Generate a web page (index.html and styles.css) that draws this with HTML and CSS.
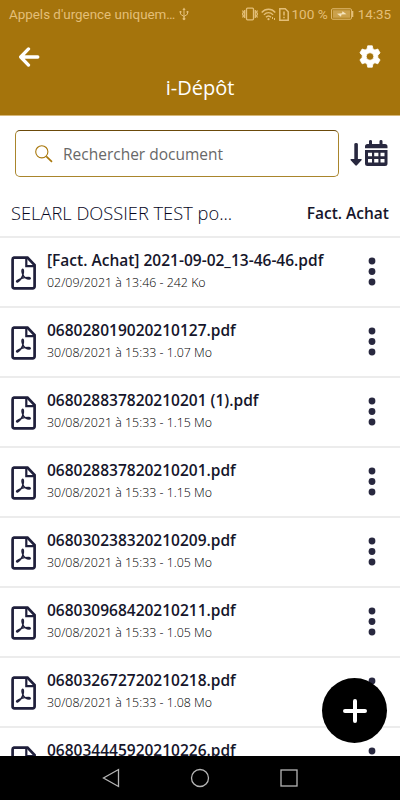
FILE: index.html
```html
<!DOCTYPE html>
<html lang="fr">
<head>
    <meta charset="UTF-8">
    <meta name="viewport" content="width=device-width, initial-scale=1.0">
    <title>i-Dépôt</title>
    <link rel="stylesheet" href="styles.css">
</head>
<body>
    <svg class="sprite" width="0" height="0">
        <symbol id="pdf" viewBox="0 0 26 34">
            <path d="M3 1.600h13.500L23.600 9v21.600a1.800 1.800 0 0 1-1.800 1.800H3.400a1.800 1.800 0 0 1-1.800-1.800V3.400A1.800 1.800 0 0 1 3 1.600z" fill="none" stroke="#1f1f3b" stroke-width="2.700"/>
            <path d="M15.300 2v8.200H24" fill="none" stroke="#1f1f3b" stroke-width="2.200"/>
            <path d="M11.800 18.500c-.9-2.200-1.300-4.900-.3-5.200 1.100-.2 1.200 2.600.5 5.200-.8 3-3.300 6.200-5.200 7.300-1 .5-1.700-.2-.9-1 1.900-1.700 6.700-3.200 11.600-3.400 2.100 0 2.300 1.500.8 1.600-2.400.1-5.400-1.700-6.500-4.500z" fill="none" stroke="#1f1f3b" stroke-width="1.400"/>
        </symbol>
        <symbol id="dots" viewBox="0 0 8 30">
            <circle cx="4" cy="4" r="3.400"/>
            <circle cx="4" cy="14.500" r="3.400"/>
            <circle cx="4" cy="25" r="3.400"/>
        </symbol>
    </svg>

    <div class="screen">
        <header class="header">
            <div class="status">
                <span class="carrier">Appels d'urgence uniquem…</span>
                <svg class="usb" width="10" height="14" viewBox="0 0 10 14" fill="none" stroke="currentColor">
                    <path d="M5 2v9M1.500 5v2.200L5 9.500l3.500-2.300V5"/>
                    <path d="M5 .5l1.600 2.500H3.400zM.6 4h1.800v1.800H.6zM7.600 4h1.800v1.800H7.600z" fill="currentColor" stroke="none"/>
                    <circle cx="5" cy="11.800" r="1.400" fill="currentColor" stroke="none"/>
                </svg>
                <div class="indicators">
                    <svg width="16" height="14" viewBox="0 0 16 14" fill="none" stroke="currentColor" stroke-width="1.300">
                        <rect x="4.500" y="1.200" width="7" height="11.600" rx="1"/>
                        <path d="M2.700 3v8M13.300 3v8M.5 3.500l1 1.500-1 2 1 2-1 1.500M15.500 3.500l-1 1.500 1 2-1 2 1 1.500"/>
                    </svg>
                    <svg class="wifi" width="15" height="13" viewBox="0 0 15 13" fill="none" stroke="currentColor" stroke-width="1.400">
                        <path d="M.7 4.500c3.800-4.300 9.800-4.300 13.600 0M2.900 6.900c2.700-3 6.500-3 9.200 0M5 9.200c1.500-1.700 3.500-1.700 5 0"/>
                        <circle cx="7.500" cy="11.200" r="1.100" fill="currentColor" stroke="none"/>
                        <path d="M11.500 9v2M13.500 10v2" stroke-width="1"/>
                    </svg>
                    <svg class="sim" width="10" height="13" viewBox="0 0 10 13" fill="none" stroke="currentColor" stroke-width="1.500">
                        <path d="M.8.8h5.400l3 3v8.400H.8z"/>
                        <path d="M5 3.500v4M5 8.700v1.600"/>
                    </svg>
                    <span class="percent">100 %</span>
                    <svg class="battery" width="23" height="12" viewBox="0 0 23 12">
                        <rect x=".6" y=".8" width="19.800" height="10.400" rx="1" fill="none" stroke="currentColor"/>
                        <rect x="2" y="2.200" width="17" height="7.600" fill="currentColor" opacity=".6"/>
                        <rect x="21" y="3" width="1.300" height="6" fill="currentColor"/>
                        <path d="M6 5.800l5-.5.500-2 4 2.900-5 .3-.5 2.200z" fill="#f5e4bd"/>
                    </svg>
                    <span class="time">14:35</span>
                </div>
            </div>
            <div class="actions">
                <svg width="22" height="20" viewBox="0 0 22 20" fill="none" stroke="#fff" stroke-width="3.300" stroke-linecap="round" stroke-linejoin="round">
                    <path d="M10.500 1.900L2.700 10l7.800 8.100M3.500 10h16.300"/>
                </svg>
                <svg width="24" height="24" viewBox="0 0 24 24" fill="#fff">
                    <path fill-rule="evenodd" d="M9.700.8h4.600l.6 3.100 2 1.100 2.900-1 2.300 4-2.300 2.200v2.400l2.300 2.200-2.300 4-2.900-1-2 1.200-.6 3.200H9.700L9.100 19l-2-1.200-2.900 1-2.300-4 2.300-2.200v-2.400L1.900 8l2.300-4 2.900 1 2-1.100zM12 7.700a3.800 3.800 0 1 0 0 7.600 3.800 3.800 0 0 0 0-7.600z" stroke="#fff" stroke-width=".8" stroke-linejoin="round"/>
                </svg>
            </div>
            <h1>i-Dépôt</h1>
        </header>

        <div class="toolbar">
            <label class="search">
                <svg width="18" height="18" viewBox="0 0 18 18" fill="none" stroke="#a9780c">
                    <circle cx="6.800" cy="6.800" r="6.100" stroke-width="1.100"/>
                    <path d="M11.300 11.300l5.700 5.500" stroke-width="1.700"/>
                </svg>
                <input type="text" placeholder="Rechercher document">
            </label>
            <svg class="sort" width="38" height="28" viewBox="0 0 38 28" fill="#28283f">
                <path d="M4.300 4.200q0-1.200 1.800-1.200t1.800 1.200V19h3.400q.8.400.2 1.200l-4.600 5.100q-.8.700-1.600 0L.7 20.200Q.1 19.400.9 19h3.400z"/>
                <path d="M15 8.200V6.500A2.500 2.500 0 0 1 17.500 4H19V1.300q0-1.300 1.500-1.300T22 1.300V4h7.500V1.300Q29.500 0 31 0t1.500 1.300V4H35a2.500 2.500 0 0 1 2.500 2.500V8.200z"/>
                <path fill-rule="evenodd" d="M15 10h22.500v13.500A2.500 2.500 0 0 1 35 26H17.500a2.500 2.500 0 0 1-2.500-2.500zm3 2.700v3.600h4v-3.600zm6.200 0v3.600h4.200v-3.600zm6.300 0v3.600h4v-3.600zM18 18.900v3.600h4v-3.600zm6.200 0v3.600h4.200v-3.600zm6.300 0v3.600h4v-3.600z"/>
            </svg>
        </div>

        <div class="folder">
            <span class="folder-name">SELARL DOSSIER TEST po...</span>
            <span class="folder-type">Fact. Achat</span>
        </div>

        <ul class="files">
            <li class="file">
                <svg class="file-icon"><use href="#pdf"/></svg>
                <div class="file-text">
                    <div class="file-name">[Fact. Achat] 2021-09-02_13-46-46.pdf</div>
                    <div class="file-info">02/09/2021 à 13:46 - 242 Ko</div>
                </div>
                <svg class="more"><use href="#dots"/></svg>
            </li>
            <li class="file">
                <svg class="file-icon"><use href="#pdf"/></svg>
                <div class="file-text">
                    <div class="file-name">068028019020210127.pdf</div>
                    <div class="file-info">30/08/2021 à 15:33 - 1.07 Mo</div>
                </div>
                <svg class="more"><use href="#dots"/></svg>
            </li>
            <li class="file">
                <svg class="file-icon"><use href="#pdf"/></svg>
                <div class="file-text">
                    <div class="file-name">068028837820210201 (1).pdf</div>
                    <div class="file-info">30/08/2021 à 15:33 - 1.15 Mo</div>
                </div>
                <svg class="more"><use href="#dots"/></svg>
            </li>
            <li class="file">
                <svg class="file-icon"><use href="#pdf"/></svg>
                <div class="file-text">
                    <div class="file-name">068028837820210201.pdf</div>
                    <div class="file-info">30/08/2021 à 15:33 - 1.15 Mo</div>
                </div>
                <svg class="more"><use href="#dots"/></svg>
            </li>
            <li class="file">
                <svg class="file-icon"><use href="#pdf"/></svg>
                <div class="file-text">
                    <div class="file-name">068030238320210209.pdf</div>
                    <div class="file-info">30/08/2021 à 15:33 - 1.05 Mo</div>
                </div>
                <svg class="more"><use href="#dots"/></svg>
            </li>
            <li class="file">
                <svg class="file-icon"><use href="#pdf"/></svg>
                <div class="file-text">
                    <div class="file-name">068030968420210211.pdf</div>
                    <div class="file-info">30/08/2021 à 15:33 - 1.05 Mo</div>
                </div>
                <svg class="more"><use href="#dots"/></svg>
            </li>
            <li class="file">
                <svg class="file-icon"><use href="#pdf"/></svg>
                <div class="file-text">
                    <div class="file-name">068032672720210218.pdf</div>
                    <div class="file-info">30/08/2021 à 15:33 - 1.08 Mo</div>
                </div>
                <svg class="more"><use href="#dots"/></svg>
            </li>
            <li class="file">
                <svg class="file-icon"><use href="#pdf"/></svg>
                <div class="file-text">
                    <div class="file-name">068034445920210226.pdf</div>
                </div>
                <svg class="more"><use href="#dots"/></svg>
            </li>
        </ul>

        <button class="add" aria-label="Ajouter">
            <svg width="24" height="24" viewBox="0 0 24 24" stroke="#fff" stroke-width="4" stroke-linecap="round">
                <path d="M12 2v20M2 12h20"/>
            </svg>
        </button>

        <nav class="navbar">
            <svg width="20" height="20" viewBox="0 0 20 20"><path d="M17.500 1.500v17L2.500 10z"/></svg>
            <svg width="20" height="20" viewBox="0 0 20 20"><circle cx="10" cy="10" r="8.500"/></svg>
            <svg width="20" height="20" viewBox="0 0 20 20"><rect x="2" y="2" width="16" height="16"/></svg>
        </nav>
    </div>
</body>
</html>
```
FILE: styles.css
```css
* {
    box-sizing: border-box;
}

body {
    margin: 0;
    background-color: #fff;
    font-family: "Open Sans", "Noto Sans", sans-serif;
    color: #16162b;
}

svg {
    display: block;
    flex-shrink: 0;
}

.sprite {
    position: absolute;
}

.screen {
    position: relative;
    display: flex;
    flex-direction: column;
    height: 800px;
    overflow: hidden;
}

/* header */
.header {
    height: 116px;
    flex-shrink: 0;
    background-color: #a5740c;
    border-bottom: 1px solid #d6b779;
    color: #fff;
}

.status {
    display: flex;
    align-items: center;
    height: 28px;
    padding: 0 9px;
    font-family: Roboto, sans-serif;
    font-size: 14px;
    color: #e4bf78;
}

.carrier {
    font-size: 13.4px;
}

.usb {
    margin-left: 4px;
}

.indicators {
    display: flex;
    align-items: center;
    margin-left: auto;
}

.wifi {
    margin-left: 3px;
}

.sim {
    margin-left: 3px;
}

.percent {
    margin-left: 2px;
    font-size: 13.6px;
}

.battery {
    margin: 0 4px 0 3px;
}

.time {
    font-size: 13.4px;
}

.actions {
    display: flex;
    align-items: center;
    justify-content: space-between;
    height: 34px;
    margin-top: 12px;
    padding: 0 18px;
}

.header h1 {
    margin: 0;
    text-align: center;
    font-size: 20px;
    font-weight: 400;
    line-height: 27px;
}

/* search */
.toolbar {
    display: flex;
    align-items: center;
    justify-content: space-between;
    padding: 14px 12px 0 15px;
}

.search {
    display: flex;
    align-items: center;
    width: 324px;
    height: 47px;
    padding-left: 19px;
    border: 1px solid #a9852c;
    border-top-color: #6b4a0a;
    border-radius: 5px;
}

.search input {
    flex: 1;
    min-width: 0;
    margin-left: 10px;
    padding: 0;
    border: none;
    outline: none;
    background: none;
    font-family: inherit;
    font-size: 15.5px;
}

.search input::placeholder {
    color: #686868;
}

.folder {
    display: flex;
    align-items: center;
    justify-content: space-between;
    height: 59px;
    padding: 12px 11px 0;
}

.folder-name {
    font-size: 18.3px;
    font-weight: 300;
    color: #05051c;
}

.folder-type {
    font-size: 15.5px;
    font-weight: 600;
}

/* list */
.files {
    flex: 1;
    min-height: 0;
    margin: 0;
    padding: 0;
    overflow: hidden;
    list-style: none;
}

.file {
    display: flex;
    align-items: flex-start;
    height: 70px;
    padding: 0 24px 0 11px;
    border-top: 2px solid #ececec;
}

.file-icon {
    width: 26px;
    height: 34px;
    margin-top: 18px;
}

.file-text {
    flex: 1;
    margin: 11px 0 0 10px;
    white-space: nowrap;
}

.file-name {
    font-size: 15.5px;
    font-weight: 600;
    line-height: 23px;
}

.file-info {
    font-size: 12.4px;
    font-weight: 300;
    line-height: 22px;
    color: #000;
}

.more {
    width: 8px;
    height: 30px;
    margin-top: 19px;
    fill: #28283f;
}

.add {
    position: absolute;
    right: 13px;
    bottom: 57px;
    display: flex;
    align-items: center;
    justify-content: center;
    width: 65px;
    height: 65px;
    padding: 0;
    border: none;
    border-radius: 50%;
    background-color: #000;
}

.navbar {
    display: flex;
    align-items: center;
    justify-content: center;
    gap: 69px;
    height: 44px;
    flex-shrink: 0;
    background-color: #000;
    fill: none;
    stroke: #b5b5b5;
    stroke-width: 1.3;
}
```
